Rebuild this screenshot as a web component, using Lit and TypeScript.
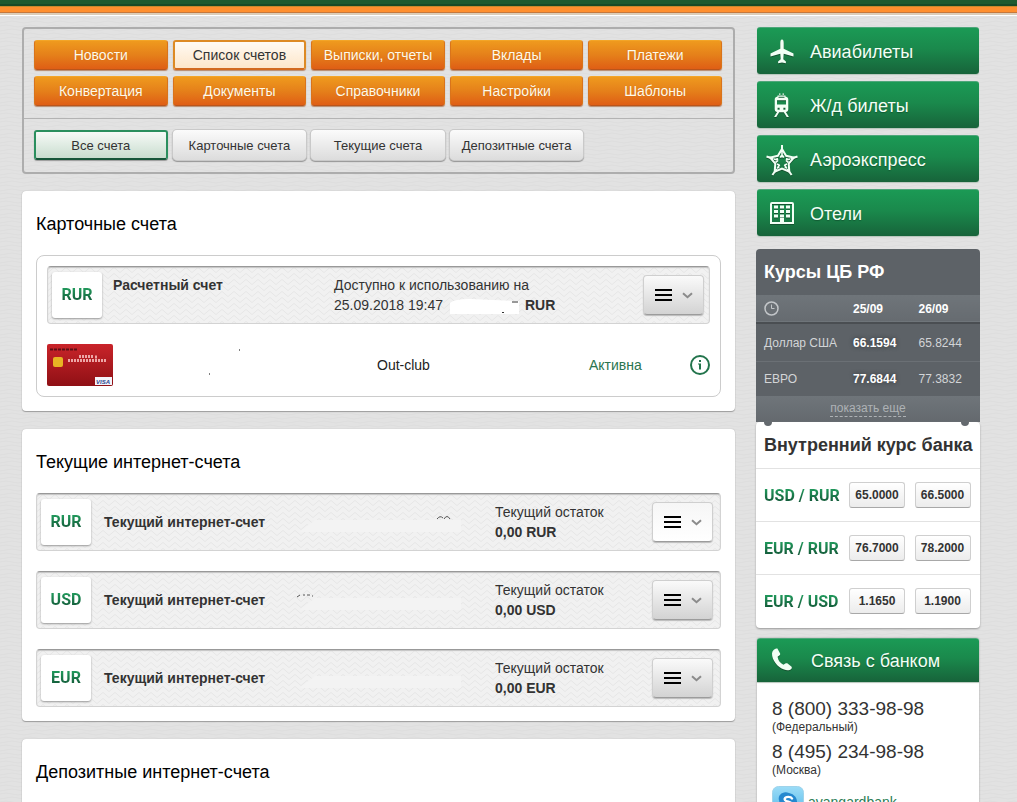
import { LitElement, html, css, svg } from "lit";
import { customElement, property } from "lit/decorators.js";
import { classMap } from "lit/directives/class-map.js";

const sections = [
  "Новости", "Список счетов", "Выписки, отчеты", "Вклады", "Платежи",
  "Конвертация", "Документы", "Справочники", "Настройки", "Шаблоны",
];
const filters = ["Все счета", "Карточные счета", "Текущие счета", "Депозитные счета"];

const icons: Record<string, unknown> = {
  plane: svg`<path d="M16 3.500c1.300 0 1.700 1.800 1.700 3.500v5.800L27.500 17.500v3L17.700 17.800l-.4 5.400 2.600 2.200v1.900L16 26.500l-3.900.8v-1.900l2.600-2.200-.4-5.400L4.500 20.500v-3L14.300 12.800V7c0-1.700.4-3.500 1.700-3.500z"/>`,
  train: svg`<path fill-rule="evenodd" d="M13 3.500h1.500v1.300H13zM16.500 3.500H18v1.300h-1.500zM11.500 5.500h8v1c1.800.3 2.800 1.500 2.800 3.200v9.600c0 1.600-1 2.600-2.400 2.800l3 4.900h-2.200l-2.900-4.800h-4.600L10.300 27H8.100l3-4.900c-1.400-.2-2.400-1.200-2.400-2.800V9.700c0-1.700 1-2.900 2.800-3.200zM12.500 6.800v1h6v-1zM11 10.200v4.300h9v-4.300zM11.600 17.800h2v2h-2zM17.400 17.800h2v2h-2z"/>`,
  star: svg`<g fill="none" stroke="#f2fff5"><path stroke-width="2" d="M16 5L20.100 11.800 27.900 13.600 22.700 19.700 23.300 27.600 16 24.500 8.700 27.600 9.300 19.700 4.100 13.600 11.900 11.800z"/><path stroke-width="2" d="M16 1v7M31.500 12.500l-7 2.300M25.600 31l-4.300-6M6.400 31l4.300-6M.5 12.500l7 2.300"/><path stroke-width="1.600" d="M16 8v5.500M24 15l-4.200 1.300M20.800 24.500l-2.400-3.800M11.200 24.500l2.400-3.800M8 15l4.200 1.300M14 13.500l2-2.500 2 2.500M21 14l-.5 3 2 1.500M19.500 24l-.5-3 2-1M12.500 24l.5-3-2-1M11 14l.5 3-2 1.500"/></g>`,
  hotel: svg`<path fill-rule="evenodd" d="M6 4h20a2 2 0 0 1 2 2v20h-24V6a2 2 0 0 1 2-2zM6 6v18h8v-4h4v4h8V6zM8 7.500h4v3h-4zM14 7.500h4v3h-4zM20 7.500h4v3h-4zM8 12h4v3h-4zM14 12h4v3h-4zM20 12h4v3h-4zM8 16.500h4v3h-4zM14 16.500h4v3h-4zM20 16.500h4v3h-4z"/>`,
  phone: svg`<path d="M7.200 5.600c1-1.500 2.600-2.600 4.200-2l2.700 4.800c.3.800-.1 1.600-.8 2.100l-1.700 1.200c.3 3.300 2.600 6.600 5.800 8l2-1.200c.8-.5 1.600-.4 2.200.1l4 3.200c.4.600.3 1.300-.1 1.900-1.700 1.700-4.400 1.900-7.400.9C11.500 22.300 5.800 14.900 6 8.500c.1-1.200.5-2 1.200-2.900z"/>`,
};

const base = css`
  *, *::before, *::after { box-sizing: border-box; }
  a { text-decoration: none; color: inherit; }
  button { font: inherit; margin: 0; cursor: pointer; }
  h2, p, ul { margin: 0; padding: 0; }
  .currency {
    font-family: Roboto, "Liberation Sans", sans-serif;
    font-weight: bold; font-size: 16px; white-space: nowrap;
    color: #17804c;
    background: linear-gradient(#20965a 20%, #145c3a 80%);
    -webkit-background-clip: text; background-clip: text;
    -webkit-text-fill-color: transparent;
  }
`;

@customElement("bank-menu")
class BankMenu extends LitElement {
  static styles = [base, css`
    :host { display: block; border: 2px solid #adadad; border-radius: 4px; }
    .grid { display: grid; grid-template-columns: repeat(5, 1fr); gap: 6px 5px; padding: 11px 11px 12px 10px; }
    .filters { border-top: 1px solid #b3b3b3; padding-top: 11px; }
    .item {
      display: flex; align-items: center; justify-content: center; height: 30px;
      border-radius: 3px; font-size: 14px; white-space: nowrap; color: #fffbe9;
      background: linear-gradient(#ef9a1e, #e5801a 50%, #df5e15);
      border: 1px solid; border-color: #f3a528 #d9741b #b9551c;
      box-shadow: 0 1px 1px #b98a6c; text-shadow: 0 0 1px #c7620f;
    }
    .item.on {
      color: #333; background: linear-gradient(#fffaf3, #fde6c9); border: 2px solid #dd8a24;
      border-bottom-color: #d2691e; text-shadow: none;
    }
    .filter {
      display: flex; align-items: center; justify-content: center; height: 30px;
      border-radius: 4px; font-size: 13px; white-space: nowrap; color: #333;
      background: linear-gradient(#fbfbfb, #dcdcdc);
      box-shadow: 0 0 0 1px #c9c9c9, 0 1px 1px 1px #959595;
    }
    .filter.on {
      background: linear-gradient(#f6faf7, #c9ddcf); border: 2px solid #2a8f5e;
      border-bottom-color: #17563a; border-radius: 3px; box-shadow: 0 1px 1px #999;
    }
  `];
  render() {
    return html`
      <nav class="grid">
        ${sections.map((s, i) => html`<a href="#" class=${classMap({ item: true, on: i === 1 })}>${s}</a>`)}
      </nav>
      <nav class="grid filters">
        ${filters.map((s, i) => html`<a href="#" class=${classMap({ filter: true, on: i === 0 })}>${s}</a>`)}
      </nav>`;
  }
}

@customElement("account-row")
class AccountRow extends LitElement {
  @property() code = "";
  @property() name = "";
  @property() trace = "";
  @property({ type: Boolean }) light = false;
  @property({ type: Boolean, reflect: true }) nested = false;
  static styles = [base, css`
    :host {
      display: flex; align-items: center; min-height: 58px; padding: 0 7px 0 4px;
      border: 1px solid #d3d3d3; border-top-color: #999; border-radius: 4px;
      box-sizing: border-box; font-size: 14px; line-height: 20px; color: #333;
      box-shadow: inset 0 1px 1px #c4c4c4;
      background: #f1f1f1 url('data:image/svg+xml,<svg xmlns="http://www.w3.org/2000/svg" width="12" height="6"><path d="M0 5.500L6 .5l6 5" fill="none" stroke="%23e6e6e6"/></svg>');
    }
    :host([nested]) { padding: 0 5px 0 4px; }
    .tile {
      display: grid; place-items: center; width: 50px; height: 46px; flex: none;
      background: #fff; border-radius: 3px; box-shadow: 0 1px 2px #999;
    }
    .name { flex: none; width: 204px; padding-left: 13px; font-weight: bold; }
    :host([nested]) .name { flex: 1; padding: 0 0 20px 11px; }
    .trace { flex: 1; min-width: 0; overflow: hidden; }
    .trace svg { display: block; }
    .sum { flex: none; width: 157px; }
    :host([nested]) .sum { width: 309px; }
    .menu {
      display: flex; align-items: center; justify-content: center; gap: 10px; flex: none;
      width: 61px; height: 40px; padding: 0; border: 1px solid #cfcfcf; border-bottom-color: #9c9c9c;
      border-radius: 4px; background: linear-gradient(#fafafa, #d3d3d3); box-shadow: 0 1px 1px #bbb;
    }
    .menu.light { background: linear-gradient(#f6f6f6, #fff); }
  `];
  render() {
    return html`
      <div class="tile"><span class="currency">${this.code}</span></div>
      <div class="name">${this.name}</div>
      ${this.nested ? "" : html`<div class="trace">
        <svg width="180" height="20" viewBox="0 0 180 20" aria-hidden="true">
          <path d="M20 8h146v12H4z" fill="#f3f3f3"/>
          <path d=${this.trace} fill="none" stroke="#555"/>
        </svg>
      </div>`}
      <div class="sum"><slot></slot></div>
      <button class=${classMap({ menu: true, light: this.light })} aria-label="Меню счета">
        <svg width="17" height="12" viewBox="0 0 17 12"><path d="M0 1h17M0 6h17M0 11h17" stroke="#000" stroke-width="2"/></svg>
        <svg width="11" height="7" viewBox="0 0 11 7"><path d="M1 1.200l4.500 4L10 1.200" fill="none" stroke="#8b8b8b" stroke-width="2"/></svg>
      </button>`;
  }
}

@customElement("bank-sidebar")
class BankSidebar extends LitElement {
  static styles = [base, css`
    :host { display: block; color: #333; }
    .services { display: grid; gap: 7px; padding: 0 1px; }
    .green {
      display: flex; align-items: center; gap: 12px; height: 47px; padding: 2px 9px 0;
      font-size: 18px; font-weight: normal; color: #f2fff5; white-space: nowrap;
      background: linear-gradient(#1b9a55, #1a894c 45%, #17633a);
      border-radius: 3px; border-top: 1px solid #4ea67a;
      box-shadow: 0 1px 1px #b5c5bb; text-shadow: 0 1px 1px #125a33;
    }
    .green svg { fill: #f2fff5; filter: drop-shadow(0 1px 0 #14532f); flex: none; }
    table { border-collapse: collapse; table-layout: fixed; width: 100%; }
    td, th { padding: 0 0 0 4px; text-align: left; }
    td:first-child, th:first-child { padding-left: 8px; width: 93px; }
    .official { margin-top: 13px; background: #5d6267; color: #fff; border-radius: 4px 4px 0 0; }
    .official h2 { font-size: 18px; line-height: 46px; padding-left: 8px; }
    .official table { font-size: 12px; color: #d3d5d7; white-space: nowrap; }
    .official thead tr { height: 28px; color: #fff; background: linear-gradient(#6f757a, #666b70); border-bottom: 2px solid #4a4e52; }
    .official thead svg { display: block; }
    .official tbody tr { height: 38px; }
    .official tbody tr:first-child td { padding-top: 2px; }
    .official tbody tr + tr { height: 35px; border-top: 1px solid #6b7075; }
    .official td:nth-child(2) { font-weight: bold; color: #fff; text-shadow: 0 0 4px #33363a; }
    .more { display: flex; justify-content: center; height: 26px; padding-top: 4px; font-size: 12px; line-height: 16px; color: #aeb2b5; background: linear-gradient(#6f757a, #64696e); }
    .more a { height: 17px; border-bottom: 1px dashed #aeb2b5; }
    .bank { background: #fff; border-radius: 4px; box-shadow: 0 1px 2px #999; }
    .pins { display: flex; justify-content: space-between; padding: 0 11px 0 8px; height: 5px; }
    .pins i { width: 8px; height: 4px; background: #64696e; border-radius: 0 0 4px 4px; }
    .bank h2 { font-size: 18px; line-height: 36px; height: 41px; padding-left: 8px; white-space: nowrap; }
    .bank tr { height: 53px; border-top: 1px solid #e2e2e2; }
    .bank td { padding: 0; }
    .rate {
      display: block; width: 56px; height: 26px; padding: 0; font-size: 12px; font-weight: bold; color: #333;
      border: 1px solid #cfcfcf; border-bottom-color: #a8a8a8; border-radius: 3px; background: linear-gradient(#fff, #ececec);
    }
    .contact { margin: 10px 1px 0; background: #fff; box-shadow: 0 0 2px #999; border-radius: 3px; }
    .contact .green { height: 44px; gap: 13px; border-radius: 3px 3px 0 0; }
    .lines { padding: 15px 15px 12px; }
    .phone { display: block; font-size: 19px; line-height: 24px; white-space: nowrap; }
    .place { font-size: 12px; line-height: 12px; padding-bottom: 7px; }
    .skype { display: flex; align-items: center; gap: 4px; margin-top: 3px; font-size: 14px; line-height: 16px; color: #2b7d55; }
  `];
  service(icon: string, label: string) {
    return html`<a href="#" class="green"><svg width="32" height="32" viewBox="0 0 32 32">${icons[icon]}</svg>${label}</a>`;
  }
  render() {
    return html`
      <nav class="services">
        ${this.service("plane", "Авиабилеты")}
        ${this.service("train", "Ж/д билеты")}
        ${this.service("star", "Аэроэкспресс")}
        ${this.service("hotel", "Отели")}
      </nav>
      <section class="official">
        <h2>Курсы ЦБ РФ</h2>
        <table>
          <thead><tr>
            <th><svg width="15" height="15" viewBox="0 0 15 15" fill="none" stroke="#c3c6c9" role="img" aria-label="Дата"><circle cx="7.500" cy="7.500" r="6.500" stroke-width="1.500"/><path d="M7.500 3.500v4h3"/></svg></th>
            <th>25/09</th><th>26/09</th>
          </tr></thead>
          <tbody>
            <tr><td>Доллар США</td><td>66.1594</td><td>65.8244</td></tr>
            <tr><td>ЕВРО</td><td>77.6844</td><td>77.3832</td></tr>
          </tbody>
        </table>
        <div class="more"><a href="#">показать еще</a></div>
      </section>
      <section class="bank">
        <div class="pins"><i></i><i></i></div>
        <h2>Внутренний курс банка</h2>
        <table class="pairs">
          ${[["USD / RUR", "65.0000", "66.5000"], ["EUR / RUR", "76.7000", "78.2000"], ["EUR / USD", "1.1650", "1.1900"]].map(
            ([pair, buy, sell]) => html`<tr>
              <th scope="row"><span class="currency">${pair}</span></th>
              <td><button class="rate">${buy}</button></td>
              <td><button class="rate">${sell}</button></td>
            </tr>`)}
        </table>
      </section>
      <section class="contact">
        <h2 class="green"><svg width="32" height="32" viewBox="0 0 32 32">${icons.phone}</svg>Связь с банком</h2>
        <div class="lines">
          <a class="phone" href="tel:88003339898">8 (800) 333-98-98</a>
          <p class="place">(Федеральный)</p>
          <a class="phone" href="tel:84952349898">8 (495) 234-98-98</a>
          <p class="place">(Москва)</p>
          <a class="skype" href="skype:avangardbank">
            <svg width="32" height="32" viewBox="0 0 32 32">
              <defs><linearGradient id="sky" x2="0" y2="1"><stop stop-color="#9bdcf7"/><stop offset="1" stop-color="#4fb6e8"/></linearGradient></defs>
              <rect x=".5" y=".5" width="31" height="31" rx="6" fill="url(#sky)" stroke="#9fd3ea"/>
              <path d="M12 6.500a9 9 0 0 1 5 .5 9 9 0 0 1 7.800 11A6 6 0 0 1 17 25.500 9.500 9.500 0 0 1 7.300 15 6 6 0 0 1 12 6.500z" fill="#2488cf"/>
              <path d="M20 12.500c-1-2-6.500-2.500-7.300.3-.8 3.700 7.800 2.200 7.300 5.700-.5 2.800-6.500 2.700-8-.5" fill="none" stroke="#fff" stroke-width="2.400" stroke-linecap="round"/>
            </svg>
            avangardbank
          </a>
        </div>
      </section>`;
  }
}

@customElement("app-root")
class AppRoot extends LitElement {
  static styles = [base, css`
    :host {
      display: block; height: 100vh; overflow: hidden;
      font-family: "Liberation Sans", Arial, sans-serif;
      background: #e2e2e2 url('data:image/svg+xml,<svg xmlns="http://www.w3.org/2000/svg" width="24" height="8"><path d="M0 2q6-2 12 0t12 0M-6 6q6 2 12 0t12 0 12 0" fill="none" stroke="%23dddddd"/></svg>');
    }
    .top { height: 16px; background: linear-gradient(#1f5a2f 0 4px, #1a4a26 4px 6px, #c9882c 6px 7px, #ff8f2e 7px 12px, #c6783c 12px 13px, #dccdb9 13px 15px, #fff 15px); }
    .page { display: grid; grid-template-columns: minmax(0, 1fr) 224px; gap: 21px; align-items: start; padding: 11px 37px 0 22px; }
    main { display: grid; grid-template-columns: minmax(0, 1fr); gap: 18px; }
    .menu { margin-bottom: -1px; }
    .card { background: #fff; border-radius: 4px; box-shadow: 0 1px 1px #9c9c9c, 0 0 1px #aaa; padding: 20px 14px 14px; }
    .card h2 { font-size: 18px; line-height: 26px; font-weight: normal; color: #000; padding-bottom: 18px; }
    .rows { display: grid; gap: 20px; }
    .group { border: 1px solid #ccc; border-radius: 8px; padding: 10px; }
    .line { display: flex; align-items: center; height: 62px; padding-top: 20px; font-size: 14px; }
    .plastic { flex: none; width: 330px; }
    .product { flex: 1; color: #222; }
    .state { width: 101px; color: #2b7550; }
    .info { padding: 0; border: 0; background: none; width: 20px; height: 20px; }
    .info svg, .plastic svg { display: block; }
    .blot { vertical-align: -5px; margin: 0 5px 0 7px; }
    .card.deposits { min-height: 160px; }
  `];
  render() {
    const traces = ["M142 7q3-4 6-1M149 7q3-5 6 0", "M2 7l3-2M8 5h2M12 5h3M17 6h1", ""];
    return html`
      <div class="top"></div>
      <div class="page">
        <main>
          <bank-menu class="menu"></bank-menu>
          <section class="card">
            <h2>Карточные счета</h2>
            <div class="group">
              <account-row nested code="RUR" name="Расчетный счет">
                Доступно к использованию на<br />25.09.2018 19:47<svg class="blot" width="70" height="16" viewBox="0 0 70 16"><path d="M0 4Q4 0 20 0l44 2h5v13H0z" fill="#fff"/><path d="M62 3h6M52 13.500h2" stroke="#333"/></svg><b>RUR</b>
              </account-row>
              <div class="line">
                <div class="plastic">
                  <svg width="196" height="44" viewBox="0 0 196 44" role="img" aria-label="Карта Visa">
                    <defs><linearGradient id="red" x2="0" y2="1"><stop stop-color="#c9242a"/><stop offset="1" stop-color="#8f1015"/></linearGradient></defs>
                    <rect y="1" width="66" height="42" rx="2" fill="url(#red)"/>
                    <path d="M3 6.500h28" stroke="#5c1015" stroke-width="2" stroke-dasharray="3 1"/>
                    <rect x="6" y="14" width="10" height="10" rx="2" fill="#e8b524"/>
                    <path d="M32 13.500h14M48 14h3M21 17.500h38" stroke="#eda7a7" stroke-width="3" stroke-dasharray="2 1"/>
                    <rect x="48" y="34" width="17" height="8" fill="#f4f4fa"/>
                    <text x="49" y="41" font-size="6" font-weight="bold" font-style="italic" fill="#2c468f">VISA</text>
                    <path d="M192 7h1M162 31h1" stroke="#000"/>
                  </svg>
                </div>
                <div class="product">Out-club</div>
                <div class="state">Активна</div>
                <button class="info" aria-label="Информация">
                  <svg width="20" height="20" viewBox="0 0 20 20"><circle cx="10" cy="10" r="9" fill="none" stroke="#23744c" stroke-width="2"/><path d="M9 5h2v2H9zM8 8.500h3v6H9v-5H8z" fill="#23744c"/></svg>
                </button>
              </div>
            </div>
          </section>
          <section class="card">
            <h2>Текущие интернет-счета</h2>
            <div class="rows">
              ${["RUR", "USD", "EUR"].map((c, i) => html`
                <account-row code=${c} name="Текущий интернет-счет" trace=${traces[i]} ?light=${i === 0}>
                  Текущий остаток<br /><b>0,00 ${c}</b>
                </account-row>`)}
            </div>
          </section>
          <section class="card deposits">
            <h2>Депозитные интернет-счета</h2>
          </section>
        </main>
        <bank-sidebar></bank-sidebar>
      </div>`;
  }
}
